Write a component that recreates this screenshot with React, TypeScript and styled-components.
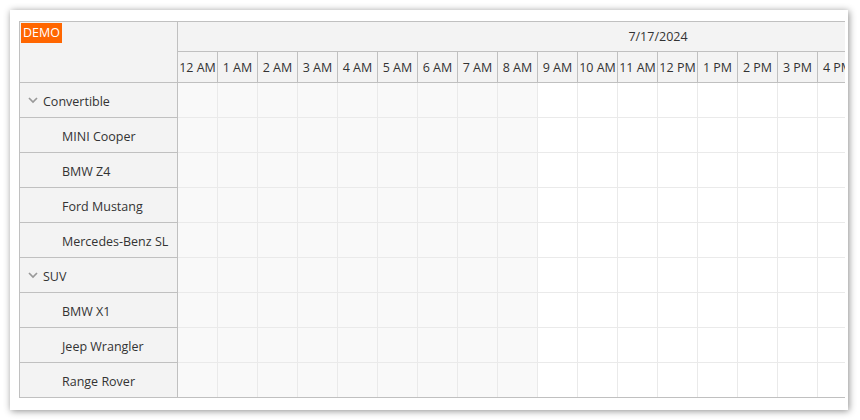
import styled, { createGlobalStyle } from "styled-components";

const GlobalStyle = createGlobalStyle`
  body {
    margin: 0;
    background: #ffffff;
    font-family: "Open Sans", "Noto Sans", sans-serif;
    color: #333333;
  }
`;

const Card = styled.div`
  margin: 10px;
  width: 838px;
  height: 400px;
  box-sizing: border-box;
  padding: 11px 3px 12px 9px;
  background: #ffffff;
  box-shadow: 1px 1px 7px rgba(0, 0, 0, 0.45);
`;

const Scheduler = styled.div`
  display: grid;
  grid-template-columns: 158px 1fr;
  border-top: 1px solid #c0c0c0;
  border-left: 1px solid #c0c0c0;
  border-bottom: 1px solid #c0c0c0;
  overflow: hidden;
  font-size: 12.5px;
`;

const Corner = styled.div`
  position: relative;
  height: 60px;
  background: #f3f3f3;
  border-right: 1px solid #c0c0c0;
  border-bottom: 1px solid #c0c0c0;
`;

const Demo = styled.div`
  position: absolute;
  top: 1px;
  left: 1px;
  padding: 0 2px;
  height: 20px;
  line-height: 20px;
  background: #ff6600;
  color: #ffffff;
  font-size: 12.5px;
`;

const TimeHeader = styled.div`
  overflow: hidden;
  background: #f3f3f3;
  border-bottom: 1px solid #c0c0c0;
`;

const HeaderInner = styled.div`
  width: 960px;
`;

const DateRow = styled.div`
  height: 29px;
  line-height: 30px;
  text-align: center;
  border-bottom: 1px solid #c0c0c0;
`;

const HourRow = styled.div`
  display: flex;
  height: 30px;
`;

const HourCell = styled.div`
  flex: 0 0 40px;
  box-sizing: border-box;
  border-right: 1px solid #c0c0c0;
  padding-top: 2px;
  line-height: 28px;
  text-align: center;
  white-space: nowrap;
  overflow: hidden;
`;

const RowHeaders = styled.div`
  background: #f3f3f3;
  border-right: 1px solid #c0c0c0;
`;

const RowHeader = styled.div<{ $child?: boolean }>`
  display: flex;
  align-items: center;
  gap: 5px;
  height: 32px;
  padding-top: 2px;
  padding-left: ${(p) => (p.$child ? "42px" : "8px")};
  border-bottom: 1px solid #c0c0c0;
  &:last-child {
    border-bottom: none;
  }
`;

const Chevron = styled.svg`
  width: 10px;
  height: 10px;
  flex: none;
  margin-top: -2px;
`;

const Grid = styled.div`
  overflow: hidden;
`;

const GridRow = styled.div`
  display: flex;
  width: 960px;
  height: 35px;
  box-sizing: border-box;
  border-bottom: 1px solid #eaeaea;
  &:last-child {
    border-bottom: none;
    height: 34px;
  }
`;

const GridCell = styled.div<{ $off: boolean }>`
  flex: 0 0 40px;
  box-sizing: border-box;
  border-right: 1px solid #eaeaea;
  background: ${(p) => (p.$off ? "#f9f9f9" : "#ffffff")};
`;

const hours = Array.from({ length: 24 }, (_, i) => {
  const h = i % 12 === 0 ? 12 : i % 12;
  return `${h} ${i < 12 ? "AM" : "PM"}`;
});

const rows: { name: string; group?: boolean }[] = [
  { name: "Convertible", group: true },
  { name: "MINI Cooper" },
  { name: "BMW Z4" },
  { name: "Ford Mustang" },
  { name: "Mercedes-Benz SL" },
  { name: "SUV", group: true },
  { name: "BMW X1" },
  { name: "Jeep Wrangler" },
  { name: "Range Rover" },
];

export default function App() {
  return (
    <>
      <GlobalStyle />
      <Card>
        <Scheduler>
          <Corner>
            <Demo>DEMO</Demo>
          </Corner>
          <TimeHeader>
            <HeaderInner>
              <DateRow>7/17/2024</DateRow>
              <HourRow>
                {hours.map((h) => (
                  <HourCell key={h}>{h}</HourCell>
                ))}
              </HourRow>
            </HeaderInner>
          </TimeHeader>
          <RowHeaders>
            {rows.map((r) => (
              <RowHeader key={r.name} $child={!r.group}>
                {r.group && (
                  <Chevron viewBox="0 0 10 10">
                    <polyline points="1,3 5,7 9,3" fill="none" stroke="#999999" strokeWidth="1.7" />
                  </Chevron>
                )}
                {r.name}
              </RowHeader>
            ))}
          </RowHeaders>
          <Grid>
            {rows.map((r) => (
              <GridRow key={r.name}>
                {hours.map((h, i) => (
                  <GridCell key={h} $off={i < 9 || i >= 18} />
                ))}
              </GridRow>
            ))}
          </Grid>
        </Scheduler>
      </Card>
    </>
  );
}
